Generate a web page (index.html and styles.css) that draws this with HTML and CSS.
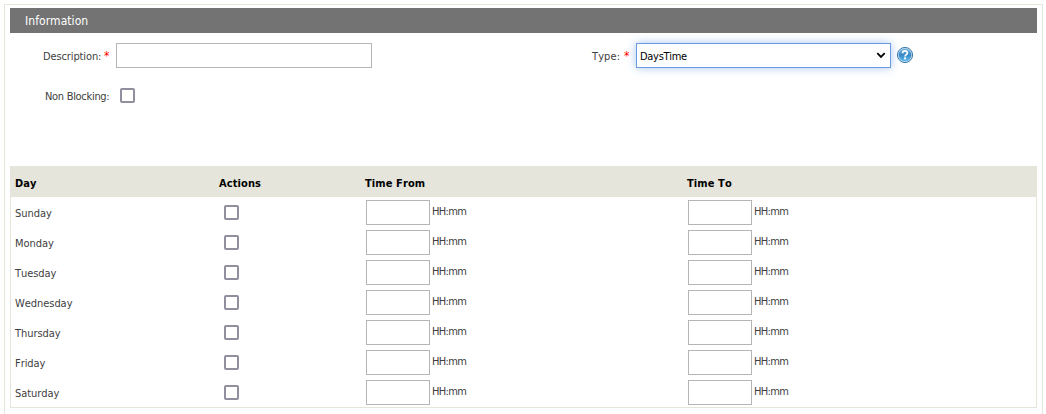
FILE: index.html
```
<!DOCTYPE html>
<html lang="en">
<head>
<meta charset="utf-8">
<title>Information</title>
<link rel="stylesheet" href="styles.css">
</head>
<body>
<main class="panel">
  <h1 class="title">Information</h1>
  <form class="form">
    <div class="row">
      <div class="field desc"><label>Description:</label><span class="req">*</span><input class="text" type="text"></div>
      <div class="field type"><label>Type:</label><span class="req">*</span>
        <div class="select"><span>DaysTime</span><svg class="chevron" width="10" height="7" viewBox="0 0 10 7"><path d="M1.3 1.2 5 4.9 8.7 1.2" fill="none" stroke="#000" stroke-width="1.8"/></svg></div>
        <svg class="help" width="18" height="18" viewBox="0 0 18 18">
          <defs><linearGradient id="g" x1="0" y1="0" x2="0" y2="1"><stop offset="0" stop-color="#6bb0e0"/><stop offset=".5" stop-color="#3587c6"/><stop offset="1" stop-color="#62bdf0"/></linearGradient></defs>
          <circle cx="9" cy="9" r="7.6" fill="#c4dcee" stroke="#3b7cab" stroke-width="1"/>
          <circle cx="9" cy="9" r="6.3" fill="url(#g)"/>
          <path d="M6.6 7.2C6.6 4.2 11.5 4.3 11.4 7c0 1.6-2.3 1.7-2.3 3.4" fill="none" stroke="#fff" stroke-width="1.8"/>
          <rect x="8.1" y="11.4" width="2" height="1.9" fill="#fff"/>
        </svg>
      </div>
    </div>
    <div class="row nb"><label>Non Blocking:</label><input class="check" type="checkbox"></div>
  </form>
  <section class="table">
    <div class="tr head"><span>Day</span><span>Actions</span><span>Time From</span><span>Time To</span></div>
    <div class="tr"><span class="day">Sunday</span><input class="check" type="checkbox"><div class="time"><input class="text" type="text"><span>HH:mm</span></div><div class="time"><input class="text" type="text"><span>HH:mm</span></div></div>
    <div class="tr"><span class="day">Monday</span><input class="check" type="checkbox"><div class="time"><input class="text" type="text"><span>HH:mm</span></div><div class="time"><input class="text" type="text"><span>HH:mm</span></div></div>
    <div class="tr"><span class="day">Tuesday</span><input class="check" type="checkbox"><div class="time"><input class="text" type="text"><span>HH:mm</span></div><div class="time"><input class="text" type="text"><span>HH:mm</span></div></div>
    <div class="tr"><span class="day">Wednesday</span><input class="check" type="checkbox"><div class="time"><input class="text" type="text"><span>HH:mm</span></div><div class="time"><input class="text" type="text"><span>HH:mm</span></div></div>
    <div class="tr"><span class="day">Thursday</span><input class="check" type="checkbox"><div class="time"><input class="text" type="text"><span>HH:mm</span></div><div class="time"><input class="text" type="text"><span>HH:mm</span></div></div>
    <div class="tr"><span class="day">Friday</span><input class="check" type="checkbox"><div class="time"><input class="text" type="text"><span>HH:mm</span></div><div class="time"><input class="text" type="text"><span>HH:mm</span></div></div>
    <div class="tr"><span class="day">Saturday</span><input class="check" type="checkbox"><div class="time"><input class="text" type="text"><span>HH:mm</span></div><div class="time"><input class="text" type="text"><span>HH:mm</span></div></div>
  </section>
</main>
</body>
</html>
```
FILE: styles.css
```
* { box-sizing: border-box; }
body {
  margin: 0;
  height: 414px;
  padding: 4px 3px 0 4px;
  overflow: hidden;
  background: #fff;
  color: #404040;
  font: 11px/14px Tahoma, "DejaVu Sans Condensed", "DejaVu Sans", sans-serif;
  font-kerning: none;
  letter-spacing: -0.3px;
  white-space: nowrap;
}
.panel {
  height: 410px;
  padding: 3px 5px 0;
  border: 1px solid #e5e5dc;
  border-bottom: 0;
}
.title {
  display: flex;
  align-items: center;
  height: 25px;
  margin: 0;
  padding-left: 15px;
  background: #737373;
  color: #fff;
  font-size: 12px;
  font-weight: 400;
  letter-spacing: 0.05px;
}
.form { height: 133px; padding-top: 10px; }
.row { display: flex; }
.field { display: flex; align-items: center; height: 25px; }
.field label, .select span, .nb label { padding-top: 2px; }
.desc { width: 549px; padding-left: 33px; }
.desc label { width: 61px; letter-spacing: -0.12px; }
.type { padding-left: 33px; }
.type label { width: 32px; letter-spacing: 0.1px; }
.req { width: 12px; color: #f00; font-size: 12px; }
.text {
  height: 25px;
  margin: 0;
  padding: 0 4px;
  border: 1px solid #b5b5b5;
  background: #fff;
  outline: 0;
}
.desc .text { width: 256px; }
.select {
  display: flex;
  align-items: center;
  justify-content: space-between;
  width: 255px;
  height: 25px;
  padding: 0 4px 0 3px;
  border: 1px solid #6b9ae0;
  background: #fff;
  box-shadow: 0 0 8px rgba(80, 140, 235, .5);
  color: #000;
}
.help { margin: 0 0 2px 5px; }
.nb { align-items: center; height: 15px; margin-top: 20px; padding-left: 35px; }
.nb label { width: 75px; }
.check {
  appearance: none;
  width: 15px;
  height: 15px;
  margin: 0;
  border: 2px solid #8f8f9d;
  border-radius: 2px;
  background: #fff;
}
.table { height: 242px; border: 1px solid #e5e5dc; border-top: 0; }
.tr {
  display: grid;
  grid-template-columns: 213px 142px 322px 1fr;
  align-items: center;
  height: 30px;
}
.tr > :first-child { padding-left: 4px; }
.day { padding-top: 3px; letter-spacing: -0.05px; }
.head {
  height: 31px;
  padding-top: 4px;
  background: #e5e5dc;
  color: #000;
  font-weight: 700;
  letter-spacing: 0.1px;
}
.head > span:nth-child(2) { margin-left: -5px; }
.head > span:nth-child(3), .head > span:nth-child(4) { margin-left: -1px; }
.time { display: flex; }
.time .text { width: 64px; }
.time span { margin-left: 2px; line-height: 24px; letter-spacing: -0.65px; }
```
